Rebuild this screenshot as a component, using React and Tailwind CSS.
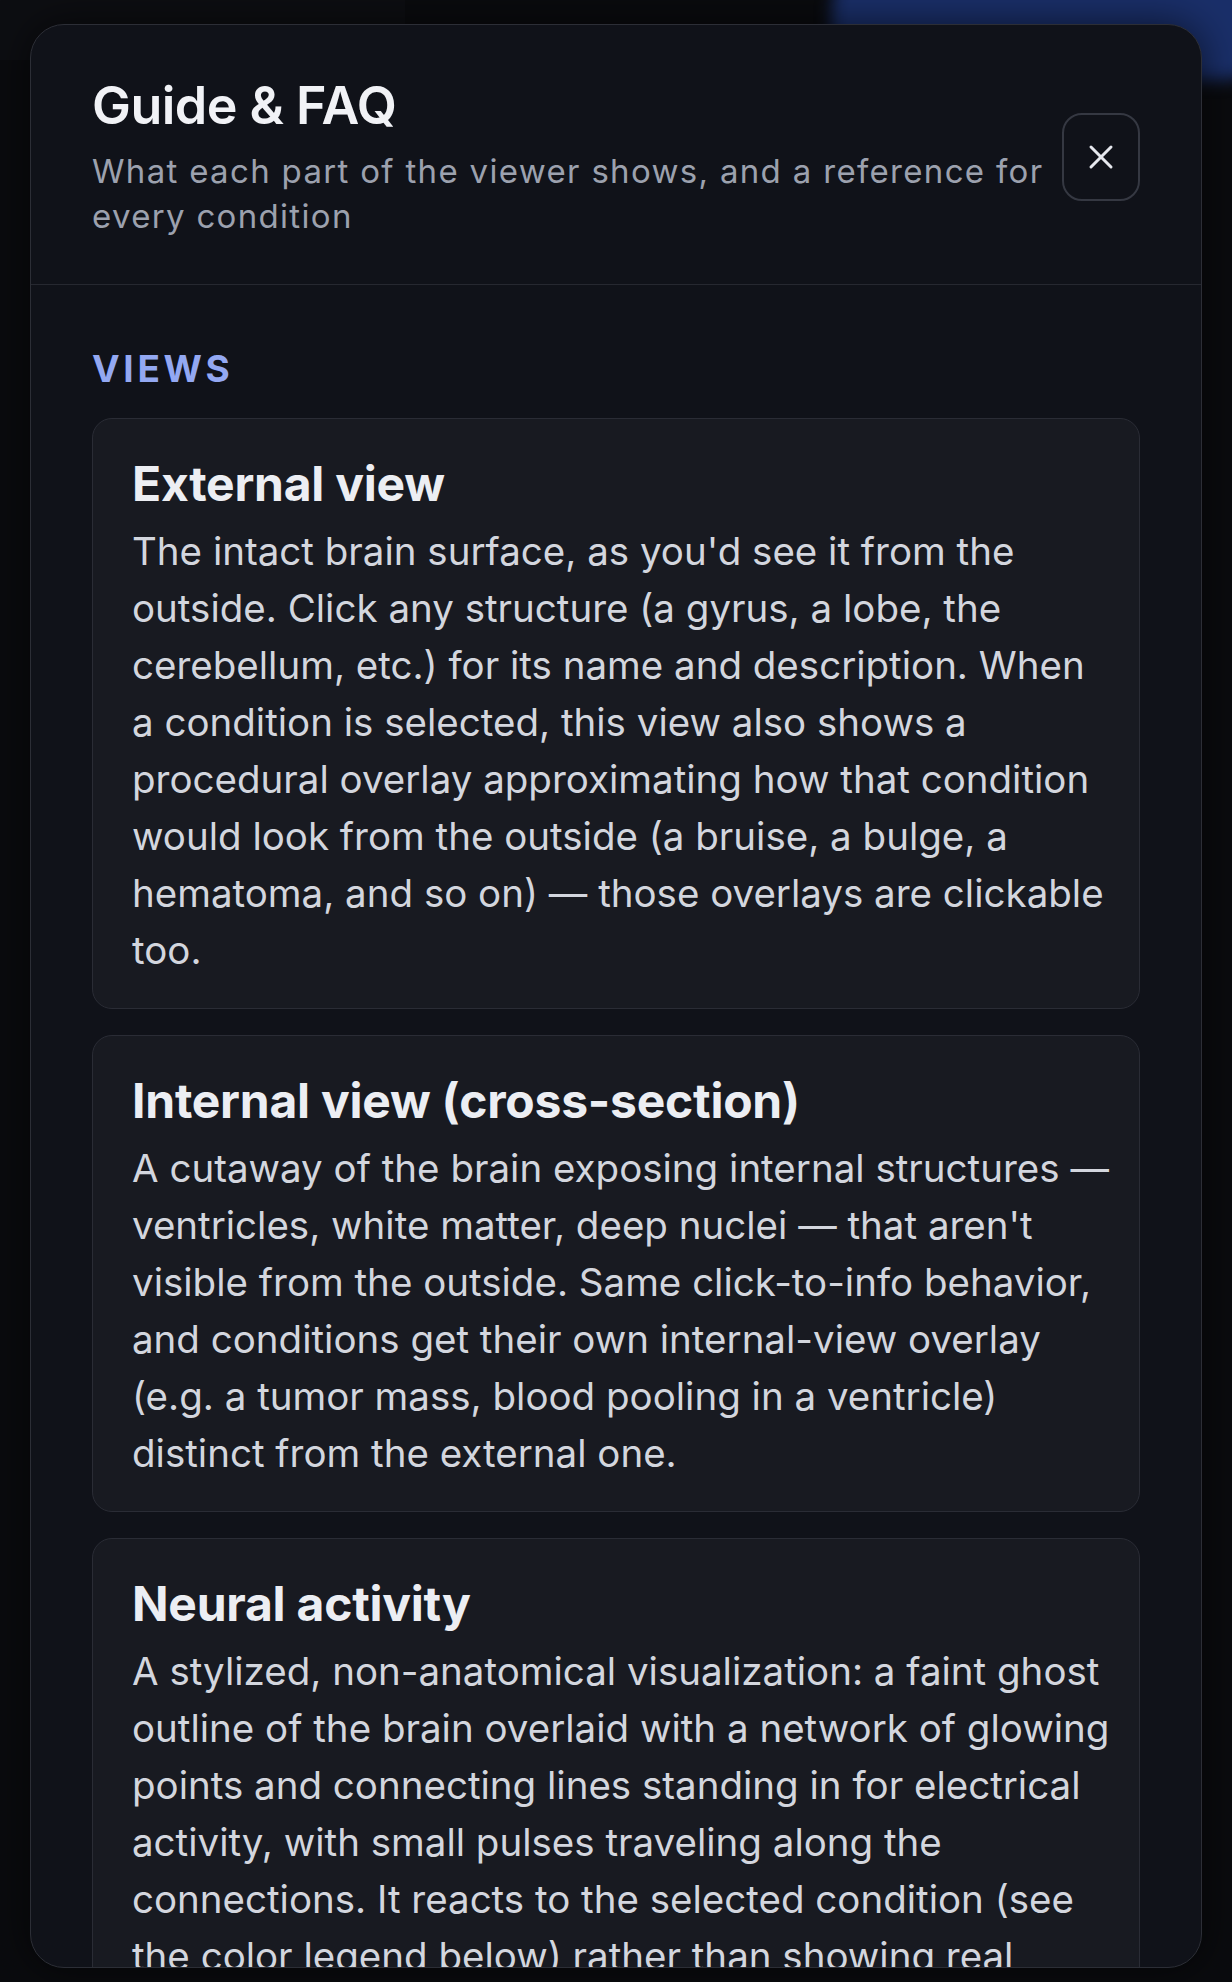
import { X } from "lucide-react";

const views = [
  {
    title: "External view",
    body: "The intact brain surface, as you'd see it from the outside. Click any structure (a gyrus, a lobe, the cerebellum, etc.) for its name and description. When a condition is selected, this view also shows a procedural overlay approximating how that condition would look from the outside (a bruise, a bulge, a hematoma, and so on) — those overlays are clickable too.",
  },
  {
    title: "Internal view (cross-section)",
    body: "A cutaway of the brain exposing internal structures — ventricles, white matter, deep nuclei — that aren't visible from the outside. Same click-to-info behavior, and conditions get their own internal-view overlay (e.g. a tumor mass, blood pooling in a ventricle) distinct from the external one.",
  },
  {
    title: "Neural activity",
    body: "A stylized, non-anatomical visualization: a faint ghost outline of the brain overlaid with a network of glowing points and connecting lines standing in for electrical activity, with small pulses traveling along the connections. It reacts to the selected condition (see the color legend below) rather than showing real recordings from a patient.",
  },
];

function ViewCard({ title, body }) {
  return (
    <div className="rounded-[20px] border border-[#2a2c35] bg-[#181a21] pl-[39px] pr-[25px] pt-[39px] pb-[29px]">
      <h3 className="text-[48px] leading-[52px] font-bold tracking-[-0.005em] text-[#eceef3]">
        {title}
      </h3>
      <p className="mt-[13px] text-[38.5px] leading-[57px] text-[#d3d6de]">
        {body}
      </p>
    </div>
  );
}

export default function App() {
  return (
    <div
      className="relative h-[1982px] overflow-hidden bg-[#0a0b0e]"
      style={{ fontFamily: "Inter, 'Noto Sans', sans-serif" }}
    >
      {/* blurred app behind the sheet */}
      <div className="absolute left-0 top-0 h-[60px] w-[405px] bg-[#0d0e12]" />
      <div className="absolute right-[-40px] top-[-40px] h-[120px] w-[440px] rounded-[50px] bg-[#1a2f69] blur-[8px]" />

      <div className="relative px-[30px] pt-[24px]">
        {/* SHEET */}
        <div className="flex h-[1944px] flex-col overflow-hidden rounded-[34px] border border-[#2c2e36] bg-[#101219] shadow-[0_0_40px_rgba(0,0,0,0.6)]">
          {/* HEADER */}
          <div className="flex items-center gap-[18px] border-b border-[#262830] px-[61px] pt-[50px] pb-[45px]">
            <div className="flex-1">
              <h2 className="text-[52px] leading-[62px] font-semibold tracking-[-0.01em] text-[#f1f2f6]">
                Guide &amp; FAQ
              </h2>
              <p className="mt-[12px] text-[33px] leading-[45px] tracking-[0.04em] text-[#9ca1ae]">
                What each part of the viewer shows, and a reference for every
                condition
              </p>
            </div>
            <button className="flex h-[88px] w-[78px] shrink-0 items-center justify-center rounded-[20px] border-2 border-[#353842] text-[#e6e8ee]">
              <X size={40} strokeWidth={1.8} />
            </button>
          </div>

          {/* BODY */}
          <div className="flex-1 overflow-hidden px-[61px] pt-[62px]">
            <h4 className="text-[37px] leading-[44px] font-bold tracking-[0.1em] text-[#93a8f2]">
              VIEWS
            </h4>
            <div className="mt-[27px] flex flex-col gap-[26px]">
              {views.map((v) => (
                <ViewCard key={v.title} title={v.title} body={v.body} />
              ))}
            </div>
          </div>
        </div>
      </div>
    </div>
  );
}
